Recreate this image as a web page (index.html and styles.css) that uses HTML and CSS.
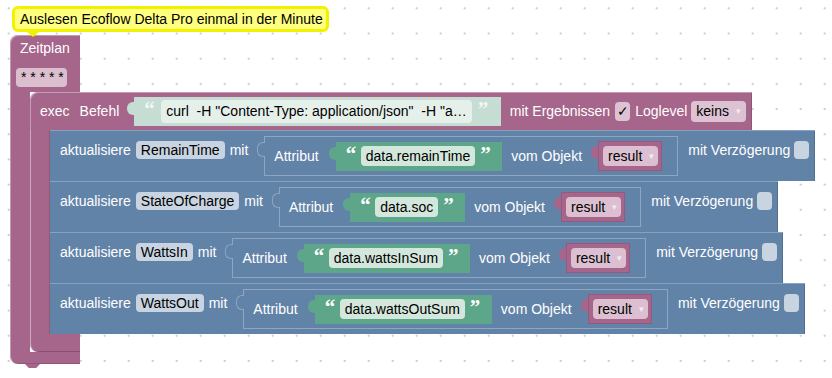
FILE: index.html
```html
<!DOCTYPE html>
<html lang="de">
<head>
    <meta charset="UTF-8">
    <meta name="viewport" content="width=device-width, initial-scale=1.0">
    <title>Blockly - Ecoflow Delta Pro</title>
    <link rel="stylesheet" href="styles.css">
</head>
<body>
<div class="workspace">
    <div class="comment">Auslesen Ecoflow Delta Pro einmal in der Minute</div>

    <div class="block-schedule">
        <div class="schedule-head">
            <span class="label">Zeitplan</span>
            <span class="field cron">* * * * *</span>
        </div>
        <div class="c-body">
            <div class="c-arm"></div>
            <div class="block-exec">
                <div class="exec-row">
                    <span class="label">exec</span>
                    <span class="label befehl">Befehl</span>
                    <div class="value text-block shadow-text">
                        <span class="quote">&ldquo;</span>
                        <span class="field">curl  -H "Content-Type: application/json"  -H "a…</span>
                        <span class="quote">&rdquo;</span>
                    </div>
                    <span class="label results">mit Ergebnissen</span>
                    <span class="check checked">✓</span>
                    <span class="label loglevel">Loglevel</span>
                    <span class="field dropdown">keins<span class="arrow">▾</span></span>
                </div>
                <div class="c-body">
                    <div class="c-arm exec-arm"></div>
                    <div class="stack">

                        <div class="block-update">
                            <span class="label">aktualisiere</span>
                            <span class="field var">RemainTime</span>
                            <span class="label mit">mit</span>
                            <div class="value attr-block">
                                <span class="label">Attribut</span>
                                <div class="value text-block">
                                    <span class="quote">&ldquo;</span>
                                    <span class="field">data.remainTime</span>
                                    <span class="quote">&rdquo;</span>
                                </div>
                                <span class="label vom">vom Objekt</span>
                                <div class="value var-block">
                                    <span class="field dropdown">result<span class="arrow">▾</span></span>
                                </div>
                            </div>
                            <span class="label delay">mit Verzögerung</span>
                            <span class="check"></span>
                        </div>

                        <div class="block-update">
                            <span class="label">aktualisiere</span>
                            <span class="field var">StateOfCharge</span>
                            <span class="label mit">mit</span>
                            <div class="value attr-block">
                                <span class="label">Attribut</span>
                                <div class="value text-block">
                                    <span class="quote">&ldquo;</span>
                                    <span class="field">data.soc</span>
                                    <span class="quote">&rdquo;</span>
                                </div>
                                <span class="label vom">vom Objekt</span>
                                <div class="value var-block">
                                    <span class="field dropdown">result<span class="arrow">▾</span></span>
                                </div>
                            </div>
                            <span class="label delay">mit Verzögerung</span>
                            <span class="check"></span>
                        </div>

                        <div class="block-update">
                            <span class="label">aktualisiere</span>
                            <span class="field var">WattsIn</span>
                            <span class="label mit">mit</span>
                            <div class="value attr-block">
                                <span class="label">Attribut</span>
                                <div class="value text-block">
                                    <span class="quote">&ldquo;</span>
                                    <span class="field">data.wattsInSum</span>
                                    <span class="quote">&rdquo;</span>
                                </div>
                                <span class="label vom">vom Objekt</span>
                                <div class="value var-block">
                                    <span class="field dropdown">result<span class="arrow">▾</span></span>
                                </div>
                            </div>
                            <span class="label delay">mit Verzögerung</span>
                            <span class="check"></span>
                        </div>

                        <div class="block-update">
                            <span class="label">aktualisiere</span>
                            <span class="field var">WattsOut</span>
                            <span class="label mit">mit</span>
                            <div class="value attr-block">
                                <span class="label">Attribut</span>
                                <div class="value text-block">
                                    <span class="quote">&ldquo;</span>
                                    <span class="field">data.wattsOutSum</span>
                                    <span class="quote">&rdquo;</span>
                                </div>
                                <span class="label vom">vom Objekt</span>
                                <div class="value var-block">
                                    <span class="field dropdown">result<span class="arrow">▾</span></span>
                                </div>
                            </div>
                            <span class="label delay">mit Verzögerung</span>
                            <span class="check"></span>
                        </div>

                    </div>
                </div>
                <div class="c-foot exec-foot"></div>
            </div>
        </div>
        <div class="c-foot schedule-foot"></div>
    </div>
</div>
</body>
</html>
```

FILE: styles.css
```css
body {
    margin: 0;
    font-family: "Liberation Sans", Arial, sans-serif;
    font-size: 14px;
}

.workspace {
    position: relative;
    width: 832px;
    height: 378px;
    overflow: hidden;
    background-color: #fff;
    background-image: radial-gradient(circle, #cdcdcd 1px, transparent 1.5px);
    background-size: 24px 25.2px;
    background-position: -3.3px -4.3px;
}

/* comment bubble */
.comment {
    position: absolute;
    left: 12px;
    top: 6px;
    z-index: 2;
    height: 20px;
    line-height: 20px;
    padding: 0 3px 0 5px;
    background-color: #ffff80;
    border: 3px solid #f2f200;
    border-radius: 6px;
    color: #000;
    white-space: nowrap;
}
.comment::after {
    content: "";
    position: absolute;
    left: 12px;
    bottom: -8px;
    width: 12px;
    height: 5px;
    background-color: #f2f200;
    clip-path: polygon(0 0, 100% 0, 50% 100%);
}

/* shared pieces */
.label {
    color: #fff;
    line-height: 18px;
    white-space: pre;
}
.field {
    color: #000;
    white-space: pre;
    border-radius: 4px;
    padding: 0 5px;
}
.check {
    width: 15px;
    height: 18px;
    border-radius: 4px;
    background-color: #c9d4e1;
    text-align: center;
    line-height: 19px;
    color: #000;
    font-size: 14px;
}
.check.checked {
    height: 19px;
    background-color: #dcc2d2;
}
.dropdown {
    display: inline-flex;
    align-items: center;
    height: 20px;
    line-height: 20px;
}
.arrow {
    margin-left: 7px;
    font-size: 9px;
    color: #f6eaf1;
}

.c-body {
    display: flex;
}
.c-arm {
    width: 20px;
    flex-shrink: 0;
    background-color: #a6658a;
    box-shadow: inset 1px 0 0 rgba(255, 255, 255, 0.35);
}
.exec-arm {
    box-shadow: inset 1px 0 0 rgba(255, 255, 255, 0.45), inset -1px 0 0 rgba(0, 0, 0, 0.12);
}
.c-foot {
    position: relative;
    background-color: #a6658a;
    border-radius: 0 0 0 8px;
    box-shadow: inset 1px 0 0 rgba(255, 255, 255, 0.35), inset 0 -1px 0 rgba(0, 0, 0, 0.15);
}
.c-foot::after,
.block-update::after {
    content: "";
    position: absolute;
    left: 15px;
    bottom: -4px;
    width: 15px;
    height: 4px;
    background-color: inherit;
    clip-path: polygon(0 0, 100% 0, 75% 100%, 25% 100%);
}
.exec-foot {
    width: 50px;
    height: 18px;
    box-shadow: inset 1px 0 0 rgba(255, 255, 255, 0.45), inset 0 -1px 0 rgba(0, 0, 0, 0.2);
}
.schedule-foot {
    width: 70px;
    height: 12px;
}

/* Zeitplan */
.block-schedule {
    position: absolute;
    left: 10px;
    top: 35px;
    display: flex;
    flex-direction: column;
    align-items: flex-start;
}
.schedule-head {
    width: 70px;
    height: 57px;
    box-sizing: border-box;
    padding-top: 4px;
    display: flex;
    flex-direction: column;
    align-items: flex-start;
    background-color: #a6658a;
    border-radius: 8px 0 0 0;
    box-shadow: inset 1px 1px 0 rgba(255, 255, 255, 0.35);
}
.schedule-head .label {
    margin-left: 10px;
}
.cron {
    margin: 11px 0 0 6px;
    width: 51px;
    height: 19px;
    box-sizing: border-box;
    line-height: 19px;
    background-color: #dbbfcf;
}

/* exec */
.block-exec {
    display: flex;
    flex-direction: column;
    align-items: flex-start;
}
.exec-row {
    display: flex;
    align-items: center;
    height: 38px;
    padding: 0 6px 0 10px;
    background-color: #a6658a;
    border-radius: 8px 0 0 0;
    box-shadow: inset 1px 1px 0 rgba(255, 255, 255, 0.35), inset -1px 0 0 rgba(0, 0, 0, 0.15);
}
.befehl {
    margin-left: 10px;
}
.results {
    margin-left: 9px;
}
.exec-row .check {
    margin-left: 5px;
}
.loglevel {
    margin-left: 5px;
}
.exec-row .dropdown {
    margin-left: 4px;
    height: 21px;
    background-color: #dcc2d2;
}

/* value blocks */
.value {
    position: relative;
    display: flex;
    align-items: center;
    box-sizing: border-box;
    margin-left: 15px;
}
.value::before {
    content: "";
    position: absolute;
    left: -7px;
    top: 5px;
    width: 7px;
    height: 13px;
    background-color: inherit;
    border-radius: 6px 0 0 6px;
}
.text-block {
    height: 29px;
    padding: 0 12px 0 10px;
    background-color: #5ea68a;
}
.text-block .field {
    margin: 0 5px;
    height: 20px;
    line-height: 20px;
    background-color: #d3e7dc;
}
.quote {
    width: 10px;
    align-self: flex-start;
    margin-top: 2px;
    text-align: center;
    font-family: "Liberation Serif", serif;
    font-weight: bold;
    font-size: 21px;
    line-height: 20px;
    color: #fff;
}
.shadow-text {
    background-color: #c6ddd4;
    padding-right: 13px;
}
.shadow-text .field {
    margin: 0 6px 0 7px;
    height: 23px;
    line-height: 23px;
    background-color: #e6f0eb;
}
.shadow-text .quote {
    color: #f1f7f4;
}

/* aktualisiere */
.stack {
    display: flex;
    flex-direction: column;
    align-items: flex-start;
}
.block-update {
    position: relative;
    display: flex;
    align-items: flex-start;
    padding: 5px 6px 5px 10px;
    background-color: #6283a8;
    border-top: 1px solid #88a1bf;
    box-shadow: inset -1px 0 0 rgba(0, 0, 0, 0.15);
}
.block-update > .label,
.block-update > .field,
.block-update > .check {
    margin-top: 5px;
}
.var {
    margin-left: 5px;
    height: 18px;
    line-height: 18px;
    background-color: #c9d4e2;
}
.mit {
    margin-left: 5px;
}
.delay {
    margin-left: 10px;
}
.block-update > .check {
    margin-left: 4px;
}

.attr-block {
    height: 40px;
    margin-left: 16px;
    padding: 0 15px 0 9px;
    background-color: #6283a8;
    border: 1px solid #8ea6c2;
}
.attr-block::before {
    border: 1px solid #8ea6c2;
    border-right: none;
    left: -8px;
}
.attr-block .text-block {
    margin-left: 17px;
}
.vom {
    margin-left: 9px;
}
.var-block {
    height: 30px;
    margin-left: 16px;
    padding: 0 4px 0 5px;
    background-color: #a6658a;
    box-shadow: inset 0 0 0 1px rgba(90, 40, 70, 0.2);
}
.var-block .dropdown {
    padding-right: 4px;
    background-color: #dcc0d1;
}
```
